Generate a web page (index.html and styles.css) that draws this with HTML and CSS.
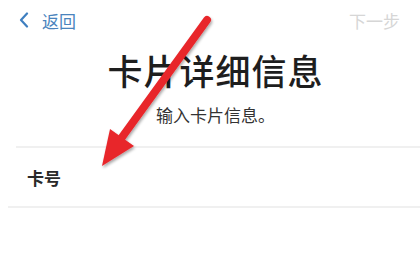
FILE: index.html
```html
<!DOCTYPE html>
<html lang="zh">
<head>
<meta charset="utf-8">
<link rel="stylesheet" href="styles.css">
</head>
<body>
<div class="page">
  <header class="nav">
    <div class="back">
      <svg class="chev" width="10" height="16" viewBox="0 0 10 16"><path d="M8 1.5 L2 8 L8 14.5" fill="none" stroke="#3f7fc0" stroke-width="2.2" stroke-linecap="round" stroke-linejoin="round"/></svg>
      <span>返回</span>
    </div>
    <span class="next">下一步</span>
  </header>
  <section class="head">
    <h1 class="title">卡片详细信息</h1>
    <p class="sub">输入卡片信息。</p>
  </section>
  <div class="list">
    <div class="row">卡号</div>
  </div>
  <svg class="arrow" width="420" height="267" viewBox="0 0 420 267">
    <defs>
      <filter id="sh" x="-20%" y="-20%" width="140%" height="140%">
        <feGaussianBlur in="SourceAlpha" stdDeviation="1.5"/>
        <feOffset dx="1" dy="1.5"/>
        <feComponentTransfer><feFuncA type="linear" slope="0.35"/></feComponentTransfer>
        <feMerge><feMergeNode/><feMergeNode in="SourceGraphic"/></feMerge>
      </filter>
    </defs>
    <g filter="url(#sh)">
      <line x1="207" y1="20" x2="120" y2="140" stroke="#e8262b" stroke-width="8" stroke-linecap="round"/>
      <polygon points="102,166 110,129 134,146" fill="#e8262b"/>
    </g>
  </svg>
</div>
</body>
</html>
```
FILE: styles.css
```css
html, body {
  margin: 0;
  padding: 0;
  background: #fff;
}
.page {
  position: relative;
  width: 420px;
  height: 267px;
  overflow: hidden;
  font-family: "Noto Sans CJK SC", "Noto Sans", sans-serif;
  color: #222;
}
.nav {
  display: flex;
  justify-content: space-between;
  align-items: center;
  height: 40px;
  padding: 0 20px 0 19px;
}
.back {
  display: flex;
  align-items: center;
  gap: 13px;
  color: #4a84bd;
  font-size: 17px;
}
.chev {
  display: block;
}
.next {
  color: #d6d6d6;
  font-size: 17px;
}
.head {
  text-align: center;
  padding-left: 11px;
}
.title {
  margin: 5px 0 0;
  font-size: 35px;
  font-weight: 500;
  line-height: 50px;
  letter-spacing: 1px;
  color: #1e1e1e;
}
.sub {
  margin: 8px 0 0;
  font-size: 17px;
  line-height: 24px;
  color: #333;
}
.list {
  margin-top: 19px;
}
.row {
  margin-left: 16px;
  border-top: 2px solid #f0f0f0;
  height: 58px;
  display: flex;
  align-items: center;
  padding-left: 11px;
  font-size: 17px;
  font-weight: 700;
  color: #2a2a2a;
}
.list::after {
  content: "";
  display: block;
  margin-left: 8px;
  border-top: 2px solid #f0f0f0;
}
.arrow {
  position: absolute;
  left: 0;
  top: 0;
}
```
